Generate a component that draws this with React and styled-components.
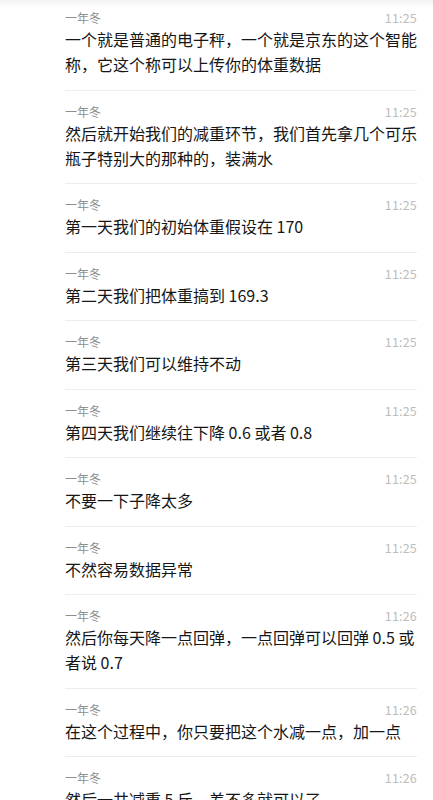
import React from 'react';
import styled, { createGlobalStyle } from 'styled-components';

const GlobalStyle = createGlobalStyle`
	html, body {
		margin: 0;
		padding: 0;
		background: #fff;
	}

	body {
		font-family: "Noto Sans CJK SC", "Noto Sans", sans-serif;
		-webkit-font-smoothing: antialiased;
	}
`;

const List = styled.div`
	position: relative;
	background: #fff;

	&::before {
		content: '';
		position: absolute;
		top: 0;
		left: 0;
		right: 0;
		height: 8px;
		background: linear-gradient( rgba( 0, 0, 0, 0.05 ), rgba( 0, 0, 0, 0 ) );
		pointer-events: none;
	}
`;

const Row = styled.div`
	margin-left: 65px;
	margin-right: 16px;
	padding: 13px 0 12.5px;
	border-bottom: 1px solid #ededed;

	&:first-child {
		padding-top: 10px;
	}
`;

const Meta = styled.div`
	display: flex;
	justify-content: space-between;
	align-items: center;
	height: 16px;
	margin-bottom: 1px;
`;

const Name = styled.span`
	font-size: 12px;
	line-height: 16px;
	color: #8f8f8f;
`;

const Time = styled.span`
	font-size: 12.5px;
	line-height: 16px;
	color: #bdbdbd;
	letter-spacing: 0.2px;
`;

const Text = styled.div`
	font-size: 16px;
	line-height: 25px;
	color: #161616;
`;

const messages = [
	{ time: '11:25', text: '一个就是普通的电子秤，一个就是京东的这个智能称，它这个称可以上传你的体重数据' },
	{ time: '11:25', text: '然后就开始我们的减重环节，我们首先拿几个可乐瓶子特别大的那种的，装满水' },
	{ time: '11:25', text: '第一天我们的初始体重假设在 170' },
	{ time: '11:25', text: '第二天我们把体重搞到 169.3' },
	{ time: '11:25', text: '第三天我们可以维持不动' },
	{ time: '11:25', text: '第四天我们继续往下降 0.6 或者 0.8' },
	{ time: '11:25', text: '不要一下子降太多' },
	{ time: '11:25', text: '不然容易数据异常' },
	{ time: '11:26', text: '然后你每天降一点回弹，一点回弹可以回弹 0.5 或者说 0.7' },
	{ time: '11:26', text: '在这个过程中，你只要把这个水减一点，加一点' },
	{ time: '11:26', text: '然后一共减重 5 斤，差不多就可以了' },
];

export default function App() {
	return (
		<>
			<GlobalStyle />
			<List>
				{ messages.map( ( m, i ) => (
					<Row key={ i }>
						<Meta>
							<Name>一年冬</Name>
							<Time>{ m.time }</Time>
						</Meta>
						<Text>{ m.text }</Text>
					</Row>
				) ) }
			</List>
		</>
	);
}
